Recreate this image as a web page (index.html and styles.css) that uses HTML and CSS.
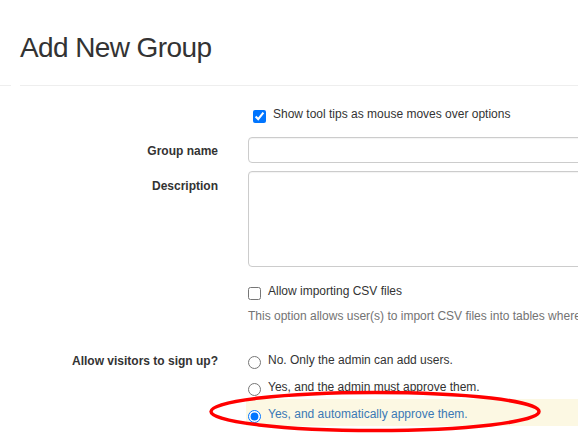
FILE: index.html
```html
<!DOCTYPE html>
<html>
<head>
<meta charset="utf-8">
<link rel="stylesheet" href="styles.css">
</head>
<body>
<div class="page">
  <div class="header">
    <div class="header-stub"></div>
    <div class="header-main"><h1>Add New Group</h1></div>
  </div>
  <form class="form">
    <div class="row row-tips">
      <div class="label"></div>
      <div class="control control-tips">
        <label class="check"><input type="checkbox" checked><span>Show tool tips as mouse moves over options</span></label>
      </div>
    </div>
    <div class="row row-name">
      <div class="label label-name">Group name</div>
      <div class="control"><input class="text" type="text"></div>
    </div>
    <div class="row row-desc">
      <div class="label label-desc">Description</div>
      <div class="control"><textarea class="area"></textarea></div>
    </div>
    <div class="row row-csv">
      <div class="label"></div>
      <div class="control">
        <label class="check"><input type="checkbox"><span>Allow importing CSV files</span></label>
        <p class="help">This option allows user(s) to import CSV files into tables where</p>
      </div>
    </div>
    <div class="row row-signup">
      <div class="label label-signup">Allow visitors to sign up?</div>
      <div class="control radios">
        <label class="radio"><input type="radio" name="signup"><span>No. Only the admin can add users.</span></label>
        <label class="radio"><input type="radio" name="signup"><span>Yes, and the admin must approve them.</span></label>
        <label class="radio radio-on"><input type="radio" name="signup" checked><span>Yes, and automatically approve them.</span></label>
      </div>
    </div>
  </form>
  <svg class="mark" width="578" height="442" viewBox="0 0 578 442">
    <ellipse cx="375" cy="411.5" rx="164" ry="19" fill="none" stroke="#ff0000" stroke-width="3.5"/>
  </svg>
</div>
</body>
</html>
```
FILE: styles.css
```css
html, body {
  margin: 0;
  padding: 0;
  overflow: hidden;
  background: #fff;
}
body {
  font-family: "Liberation Sans", Arial, sans-serif;
  font-size: 12px;
  line-height: 17px;
  color: #333;
}
.page {
  position: relative;
  width: 578px;
  height: 442px;
  overflow: hidden;
}
.header {
  display: flex;
  align-items: flex-end;
}
.header-stub {
  width: 11px;
  border-bottom: 1px solid #eee;
  flex: none;
}
.header-main {
  flex: 1;
  margin-left: 9px;
  padding: 31px 0 21px;
  border-bottom: 1px solid #eee;
}
h1 {
  margin: 0;
  font-size: 28px;
  line-height: 33px;
  letter-spacing: -0.6px;
  font-weight: normal;
  color: #333;
}
.form {
  margin: 0;
  padding-top: 20px;
}
.row {
  display: flex;
  align-items: flex-start;
}
.label {
  width: 218px;
  flex: none;
  text-align: right;
  font-weight: bold;
}
.control {
  margin-left: 30px;
  flex: 1;
  min-width: 0;
}
.control-tips {
  padding-left: 5px;
}
.check, .radio {
  display: flex;
  align-items: flex-start;
  gap: 7px;
  white-space: nowrap;
}
.check input {
  width: 13px;
  height: 13px;
  margin: 4px 0 0;
  flex: none;
}
.radio input {
  width: 13px;
  height: 13px;
  margin: 4px 0 0;
  flex: none;
}
.row-name {
  margin-top: 14px;
}
.label-name {
  padding-top: 6px;
}
.text {
  display: block;
  box-sizing: border-box;
  width: 400px;
  height: 26px;
  border: 1px solid #ccc;
  border-radius: 4px;
  box-shadow: inset 0 1px 1px rgba(0,0,0,0.05);
  margin: 0;
}
.row-desc {
  margin-top: 8px;
}
.label-desc {
  padding-top: 7px;
}
.area {
  display: block;
  box-sizing: border-box;
  width: 400px;
  height: 96px;
  border: 1px solid #ccc;
  border-radius: 4px;
  box-shadow: inset 0 1px 1px rgba(0,0,0,0.05);
  margin: 0;
  resize: none;
}
.row-csv {
  margin-top: 16px;
}
.help {
  margin: 8px 0 0;
  color: #737373;
  white-space: nowrap;
}
.row-signup {
  margin-top: 20px;
}
.label-signup {
  padding-top: 8px;
}
.radios {
  margin-left: 28px;
}
.radio {
  padding: 7px 0 3px 2px;
}
.radio-on {
  background: #fcf8e3;
  color: #3a78b5;
}
.mark {
  position: absolute;
  left: 0;
  top: 0;
  pointer-events: none;
}
```
